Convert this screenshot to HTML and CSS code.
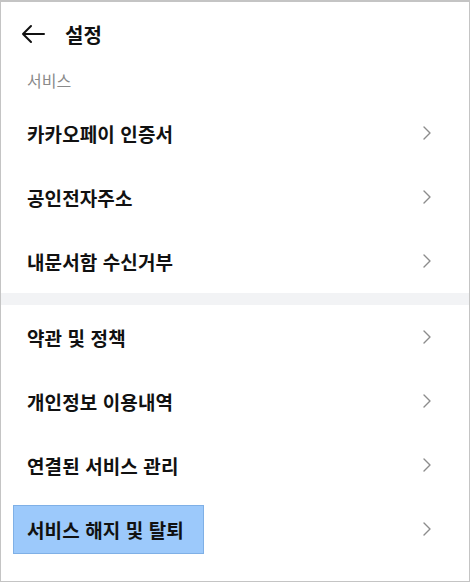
FILE: index.html
```html
<!DOCTYPE html>
<html lang="ko">
<head>
    <meta charset="UTF-8">
    <meta name="viewport" content="width=device-width, initial-scale=1.0">
    <title>설정</title>
    <link rel="stylesheet" href="styles.css">
</head>
<body>
    <div class="screen">
        <div class="header">
            <svg class="back" width="26" height="20" viewBox="0 0 26 20">
                <path d="M24 10H3M11 2L3 10l8 8" fill="none" stroke="#111" stroke-width="2" stroke-linecap="round" stroke-linejoin="round"/>
            </svg>
            <h1>설정</h1>
        </div>

        <div class="section-label">서비스</div>
        <ul class="menu">
            <li><span class="text">카카오페이 인증서</span><svg class="chev" width="8" height="14" viewBox="0 0 8 14"><polyline points="1,1 7,7 1,13"/></svg></li>
            <li><span class="text">공인전자주소</span><svg class="chev" width="8" height="14" viewBox="0 0 8 14"><polyline points="1,1 7,7 1,13"/></svg></li>
            <li><span class="text">내문서함 수신거부</span><svg class="chev" width="8" height="14" viewBox="0 0 8 14"><polyline points="1,1 7,7 1,13"/></svg></li>
        </ul>

        <div class="divider"></div>

        <ul class="menu">
            <li><span class="text">약관 및 정책</span><svg class="chev" width="8" height="14" viewBox="0 0 8 14"><polyline points="1,1 7,7 1,13"/></svg></li>
            <li><span class="text">개인정보 이용내역</span><svg class="chev" width="8" height="14" viewBox="0 0 8 14"><polyline points="1,1 7,7 1,13"/></svg></li>
            <li><span class="text">연결된 서비스 관리</span><svg class="chev" width="8" height="14" viewBox="0 0 8 14"><polyline points="1,1 7,7 1,13"/></svg></li>
            <li><span class="text selected">서비스 해지 및 탈퇴</span><svg class="chev" width="8" height="14" viewBox="0 0 8 14"><polyline points="1,1 7,7 1,13"/></svg></li>
        </ul>
    </div>
</body>
</html>
```

FILE: styles.css
```css
body {
    margin: 0;
    font-family: "Noto Sans CJK KR", "Noto Sans", sans-serif;
    color: #111;
    background: #fff;
}

.screen {
    width: 470px;
    height: 582px;
    box-sizing: border-box;
    border: 1px solid #c4c4c4;
    border-top-width: 2px;
    overflow: hidden;
}

.header {
    height: 64px;
    display: flex;
    align-items: center;
    padding-left: 19px;
}

.back {
    display: block;
    margin-right: 19px;
}

h1 {
    margin: 0;
    font-size: 20px;
    font-weight: 700;
}

.section-label {
    height: 35px;
    padding-left: 26px;
    font-size: 16px;
    line-height: 28px;
    color: #8a8a8a;
}

.menu {
    list-style: none;
    margin: 0;
    padding: 0;
}

.menu li {
    height: 64px;
    display: flex;
    align-items: center;
    justify-content: space-between;
    padding: 0 38px 0 26px;
}

.text {
    font-size: 19px;
    font-weight: 700;
    letter-spacing: 0.1px;
}

.text.selected {
    margin-left: -14px;
    padding: 0 19px 0 13px;
    line-height: 47px;
    background: #9cc9fb;
    border: 1px solid #7fb0e6;
}

.chev {
    display: block;
}

.chev polyline {
    fill: none;
    stroke: #8c8c8c;
    stroke-width: 1.4;
    stroke-linecap: round;
    stroke-linejoin: round;
}

.divider {
    height: 12px;
    background: #f2f3f5;
}
```
